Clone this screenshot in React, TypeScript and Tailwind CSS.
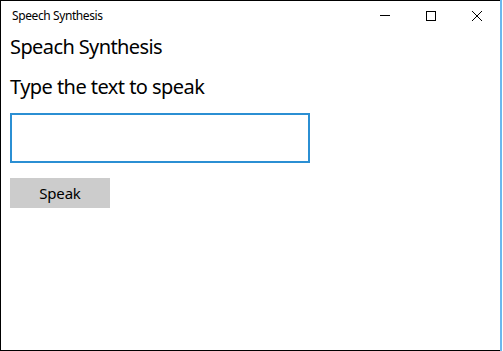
import React from "react";

export default function App() {
  const font = { fontFamily: '"Noto Sans", "Open Sans", sans-serif' };
  return (
    <div className="w-[503px] h-[351px] bg-white flex" style={font}>
      <div className="w-[500px] h-[351px] border-t border-l border-b border-black flex flex-col">
        <div className="h-[30px] flex items-start">
          <div className="flex-1 pl-[11px] pt-[7px] text-[12px] leading-[16px] tracking-[-0.4px] text-black">Speech Synthesis</div>
          <div className="flex h-[30px]">
            <div className="w-[46px] h-[30px] flex items-center justify-center">
              <svg width="10" height="10" viewBox="0 0 10 10"><path d="M0 4.5H10" stroke="#000" strokeWidth="1" /></svg>
            </div>
            <div className="w-[46px] h-[30px] flex items-center justify-center">
              <svg width="10" height="10" viewBox="0 0 10 10"><rect x="0.5" y="0.5" width="9" height="9" fill="none" stroke="#000" strokeWidth="1" /></svg>
            </div>
            <div className="w-[46px] h-[30px] flex items-center justify-center">
              <svg width="10" height="10" viewBox="0 0 10 10"><path d="M0 0L10 10M10 0L0 10" stroke="#000" strokeWidth="1" /></svg>
            </div>
          </div>
        </div>
        <div className="flex flex-col pl-[9px] text-black">
          <div className="text-[20px] leading-[28px] mt-[2px] tracking-[-0.6px]">Speach Synthesis</div>
          <div className="text-[20px] leading-[28px] mt-[12px] tracking-[-0.55px]">Type the text to speak</div>
          <div className="w-[300px] h-[50px] border-2 border-[#2b8fd3] mt-[12px]" />
          <div className="w-[100px] h-[30px] bg-[#cccccc] mt-[15px] flex items-center justify-center text-[15px] leading-[20px] tracking-[-0.2px]">Speak</div>
        </div>
      </div>
      <div className="w-[2px] h-[351px] bg-[#6cb8ee]" />
      <div className="w-[1px] h-[351px] bg-white" />
    </div>
  );
}
